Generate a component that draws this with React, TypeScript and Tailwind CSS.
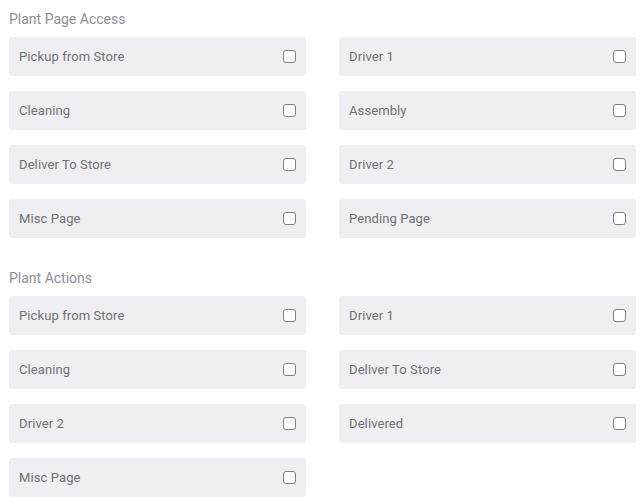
const pageAccess = [
  'Pickup from Store',
  'Driver 1',
  'Cleaning',
  'Assembly',
  'Deliver To Store',
  'Driver 2',
  'Misc Page',
  'Pending Page',
]

const actions = [
  'Pickup from Store',
  'Driver 1',
  'Cleaning',
  'Deliver To Store',
  'Driver 2',
  'Delivered',
  'Misc Page',
]

const PermissionRow = ({ label }: { label: string }) => {
  return (
    <label className="flex h-[39px] items-center justify-between rounded-[3px] bg-[#efeff3] pr-[10px] pl-[10px]">
      <span className="text-[13px] tracking-[0.1px] text-[#707074]">{label}</span>
      <span className="block h-[13px] w-[13px] rounded-[3px] border border-[#808085] bg-white" />
    </label>
  )
}

const Section = ({ title, items, className }: { title: string; items: string[]; className?: string }) => {
  return (
    <section className={className}>
      <h2 className="mb-[10px] text-[14px] leading-[16px] text-[#8e8e98]">{title}</h2>
      <div className="grid grid-cols-2 gap-x-[33px] gap-y-[15px]">
        {items.map((item, index) => (
          <PermissionRow key={index} label={item} />
        ))}
      </div>
    </section>
  )
}

export default function App() {
  return (
    <div className="h-[504px] w-[640px] overflow-hidden bg-white pt-[11px] pr-[4px] pl-[9px] font-['Roboto',sans-serif]">
      <Section title="Plant Page Access" items={pageAccess} />
      <Section title="Plant Actions" items={actions} className="mt-[32px]" />
    </div>
  )
}
